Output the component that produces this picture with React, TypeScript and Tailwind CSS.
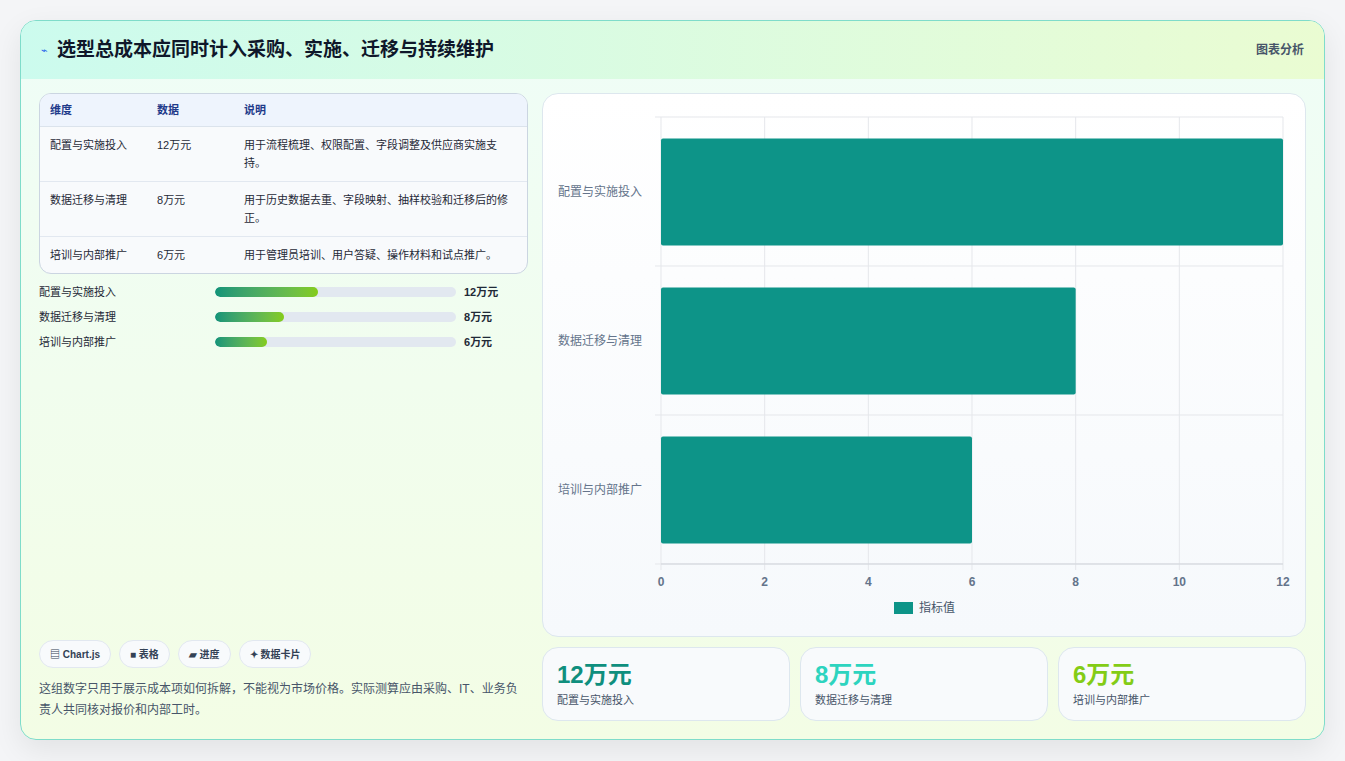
import React from "react";

const rows = [
  { k: "配置与实施投入", v: 12, d: "用于流程梳理、权限配置、字段调整及供应商实施支持。" },
  { k: "数据迁移与清理", v: 8, d: "用于历史数据去重、字段映射、抽样校验和迁移后的修正。" },
  { k: "培训与内部推广", v: 6, d: "用于管理员培训、用户答疑、操作材料和试点推广。" },
];

function Chart() {
  const x0 = 118, x1 = 740, y0 = 23, y1 = 470;
  const sx = (v: number) => x0 + ((x1 - x0) * v) / 12;
  const band = (y1 - y0) / 3;
  return (
    <svg width="762" height="542" className="block" style={{ fontFamily: "'Liberation Sans','Noto Sans CJK SC',sans-serif" }}>
      {[0, 2, 4, 6, 8, 10, 12].map((t) => (
        <g key={t}>
          <line x1={sx(t)} x2={sx(t)} y1={y0} y2={y1 + 6} stroke="#e5e7eb" />
          <text x={sx(t)} y={492} textAnchor="middle" fontSize="12" fontWeight="bold" fill="#64748b">{t}</text>
        </g>
      ))}
      {[0, 1, 2, 3].map((i) => (
        <line key={i} x1={x0 - 6} x2={x1} y1={y0 + band * i} y2={y0 + band * i} stroke="#e5e7eb" />
      ))}
      <line x1={x0} x2={x1} y1={y1} y2={y1} stroke="#d1d5db" />
      {rows.map((r, i) => {
        const cy = y0 + band * i + band / 2;
        return (
          <g key={r.k}>
            <rect x={x0} y={cy - 53} width={sx(r.v) - x0} height={107} fill="#0d9488" rx="2" />
            <text x={15} y={cy + 4} fontSize="12" fill="#64748b">{r.k}</text>
          </g>
        );
      })}
      <rect x={351} y={508} width={19} height={12} fill="#0d9488" />
      <text x={376} y={518} fontSize="12" fill="#475569">指标值</text>
    </svg>
  );
}

export default function App() {
  return (
    <div className="min-h-[761px] w-[1345px] bg-[#f4f5f7] pt-5 pl-5" style={{ fontFamily: "'Liberation Sans','Noto Sans CJK SC',sans-serif" }}>
      <div className="w-[1305px] h-[720px] rounded-2xl border border-[#7fdcca] overflow-hidden shadow-[0_10px_30px_rgba(0,0,0,0.08)] bg-gradient-to-b from-[#effdf7] to-[#f3fde5] flex flex-col">
        <div className="h-[58px] shrink-0 flex items-center justify-between px-[20px] bg-gradient-to-r from-[#ccfbee] to-[#eafcd2]">
          <div className="flex items-center gap-[9px]">
            <span className="text-[#2563eb] text-[11px]">⌁</span>
            <span className="text-[19px] font-bold text-[#0f172a]">选型总成本应同时计入采购、实施、迁移与持续维护</span>
          </div>
          <span className="text-[12px] font-bold text-[#475569]">图表分析</span>
        </div>
        <div className="flex gap-[14px] px-[18px] pt-[14px] pb-[18px] flex-1">
          <div className="w-[490px] flex flex-col">
            <div className="rounded-xl border border-[#cbd5e1] overflow-hidden bg-[#f8fafc] text-[11px]">
              <div className="flex h-[33px] items-center bg-[#eef4fd] font-bold text-[#1e3a8a] border-b border-[#dbe3ec]">
                <div className="w-[117px] pl-[10px]">维度</div>
                <div className="w-[87px]">数据</div>
                <div>说明</div>
              </div>
              {rows.map((r, i) => (
                <div key={r.k} className={"flex py-[9px] text-[#1f2937] leading-[18px] " + (i < 2 ? "border-b border-[#e2e8f0]" : "")}>
                  <div className="w-[117px] pl-[10px]">{r.k}</div>
                  <div className="w-[87px]">{r.v}万元</div>
                  <div className="w-[270px]">{r.d}</div>
                </div>
              ))}
            </div>
            <div className="mt-[10px] flex flex-col gap-[9px] text-[11px] text-[#1f2937]">
              {rows.map((r) => (
                <div key={r.k} className="flex items-center h-[16px]">
                  <div className="w-[176px]">{r.k}</div>
                  <div className="w-[241px] h-[10px] rounded-full bg-[#e2e8f0] overflow-hidden">
                    <div className="h-full rounded-full bg-gradient-to-r from-[#0f9478] to-[#84cc16]" style={{ width: `${(r.v / 28) * 100}%` }} />
                  </div>
                  <div className="ml-[8px] font-bold">{r.v}万元</div>
                </div>
              ))}
            </div>
            <div className="mt-auto flex gap-[8px] text-[10px] font-bold text-[#334155]">
              {["▤ Chart.js", "■ 表格", "▰ 进度", "✦ 数据卡片"].map((c) => (
                <span key={c} className="h-[28px] px-[10px] flex items-center rounded-full border border-[#e2e8f0] bg-[#f8fafc]">{c}</span>
              ))}
            </div>
            <p className="mt-[11px] text-[12px] leading-[21px] text-[#475569]">这组数字只用于展示成本项如何拆解，不能视为市场价格。实际测算应由采购、IT、业务负责人共同核对报价和内部工时。</p>
          </div>
          <div className="flex-1 flex flex-col gap-[10px]">
            <div className="h-[544px] rounded-2xl border border-[#dde7ee] bg-gradient-to-b from-white to-[#f6f9fc] overflow-hidden">
              <Chart />
            </div>
            <div className="flex gap-[10px] flex-1">
              {[["#0f8f7e", 0], ["#2dd4bf", 1], ["#84cc16", 2]].map(([col, i]) => (
                <div key={i as number} className="flex-1 rounded-2xl border border-[#dde7ee] bg-[#f8fafc] px-[14px] pt-[12px]">
                  <div className="text-[24px] font-bold leading-[30px]" style={{ color: col as string }}>{rows[i as number].v}万元</div>
                  <div className="text-[11px] text-[#475569] mt-[2px]">{rows[i as number].k}</div>
                </div>
              ))}
            </div>
          </div>
        </div>
      </div>
    </div>
  );
}
